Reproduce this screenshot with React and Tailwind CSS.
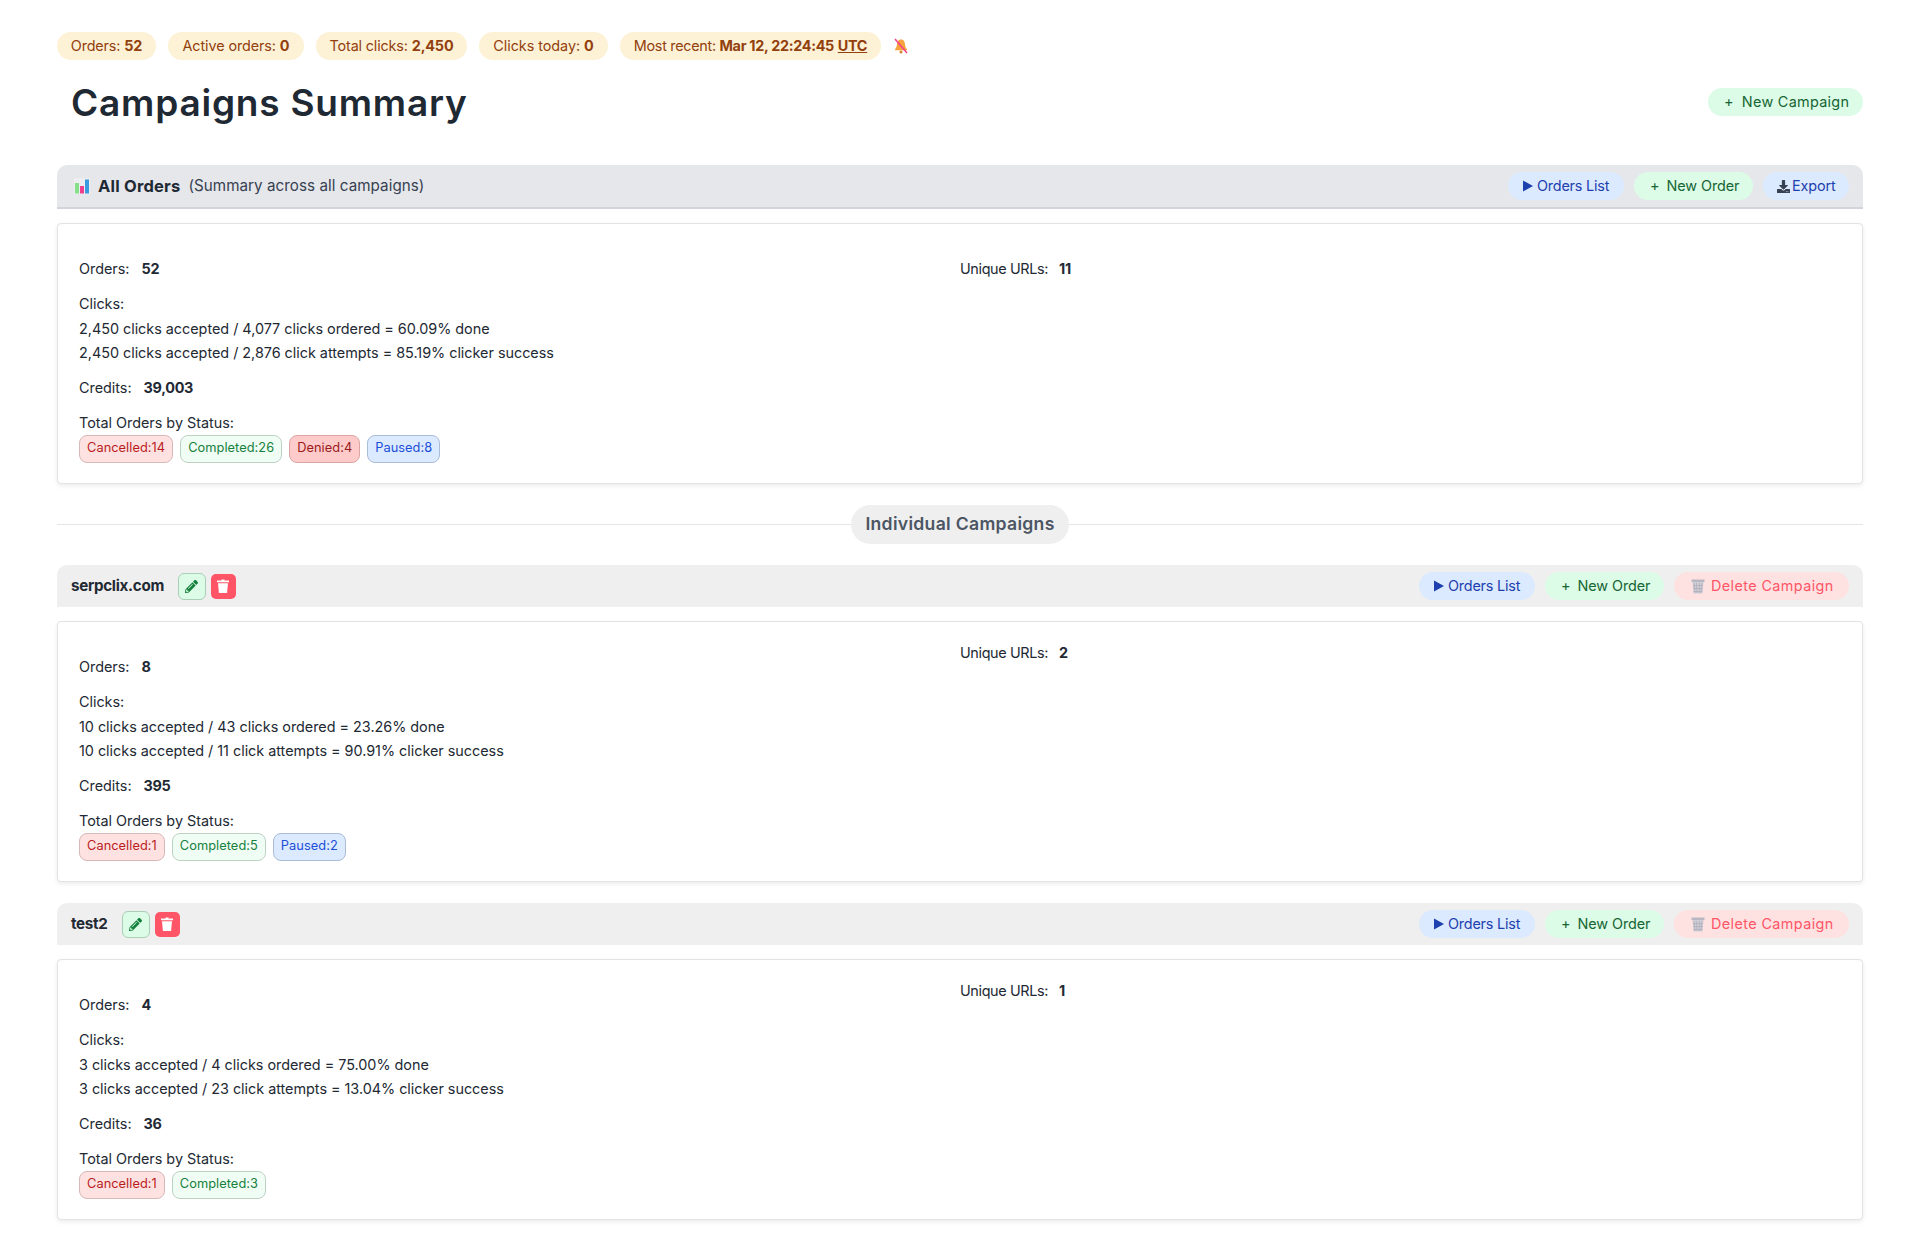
import React from "react";
import { FaPencilAlt, FaDownload } from "react-icons/fa";

const Play = ({ cls = "text-[#1e40af]" }) => (
  <svg viewBox="0 0 10 12" className={"w-[10px] h-[12px] shrink-0 " + cls}><polygon points="0,0.5 10,6 0,11.5" fill="currentColor" /></svg>
);

const ChartEmoji = () => (
  <svg viewBox="0 0 16 16" className="w-[16px] h-[16px] shrink-0">
    <rect x="0" y="0" width="16" height="16" fill="#eceef2" />
    <rect x="1" y="5" width="4" height="10.500" fill="#86e08a" />
    <rect x="6" y="8" width="4" height="7.500" fill="#ee3f8f" />
    <rect x="11" y="1.500" width="4" height="14" fill="#3a9be0" />
  </svg>
);

const BellOff = () => (
  <svg viewBox="0 0 16 16" className="w-[16px] h-[16px] shrink-0">
    <path d="M8 1.500c-3 0-3.800 2.600-4 5-.2 2.300-1.200 3.800-2 4.800v1h12v-1c-.8-1-1.800-2.500-2-4.800-.2-2.400-1-5-4-5z" fill="#f6a33c" />
    <circle cx="8" cy="14" r="1.500" fill="#d9822b" />
    <line x1="2" y1="1" x2="14" y2="15" stroke="#f5418b" strokeWidth="1.500" />
  </svg>
);

const Basket = () => (
  <svg viewBox="0 0 14 15" className="w-[14px] h-[15px] shrink-0">
    <rect x="0.500" y="0.500" width="13" height="2.500" fill="#b9b7c2" />
    <path d="M1.500 3h11l-1 11.500h-9z" fill="#cfcdd6" />
    <path d="M3 4l1 10M5.500 4l.3 10M8.500 4l-.3 10M11 4l-1 10M2 6.500h10M2.300 9.500h9.400M2.600 12.500h8.800" stroke="#b0aeba" strokeWidth="0.700" fill="none" />
  </svg>
);

const Bin = () => (
  <svg viewBox="0 0 12 14" className="w-[12px] h-[14px]">
    <path d="M4.500 0.500h3v1h4.500v1.800H0V1.500h4.500z" fill="#ffffff" />
    <path d="M1 4.200h10l-.9 9.800H1.900z" fill="#ffffff" />
  </svg>
);

const Pill = ({ className = "", children }) => (
  <span className={"inline-flex items-center h-7 rounded-[14px] text-[14.4px] whitespace-nowrap " + className}>{children}</span>
);

const OrdersList = () => (
  <Pill className="bg-[#dbeafe] text-[#1e40af] pl-[15px] gap-[4px] w-[116px] tracking-[-0.2px]"><Play />Orders List</Pill>
);
const NewOrder = () => (
  <Pill className="bg-[#dcfce7] text-[#166534] pl-[16px] gap-[7px] w-[119px] tracking-[-0.07px]"><span>+</span>New Order</Pill>
);

const Chip = ({ label, value, w, tight, children }) => (
  <span className={"inline-flex items-center justify-center h-7 rounded-[14px] bg-[#fdf2d5] text-[#92400e] text-[14.4px] whitespace-nowrap " + w + " " + tight}>
    {label}&nbsp;<strong className="font-bold">{value}</strong>{children}
  </span>
);

const tones = {
  Cancelled: "bg-[#fee2e2] border-[#d9b8b8] text-[#b91c1c]",
  Completed: "bg-[#f0fdf4] border-[#bcd3c3] text-[#15803d]",
  Denied: "bg-[#fecaca] border-[#dba5a5] text-[#991b1b]",
  Paused: "bg-[#dbeafe] border-[#a9bcd8] text-[#1d4ed8]",
};

const Status = ({ name, n }) => (
  <span className={"inline-flex items-center h-7 px-[7px] rounded-[8px] border text-[12.8px] tracking-[0.05px] whitespace-nowrap " + tones[name]}>{name}:{n}</span>
);

const Stats = ({ orders, urls, a, b, credits, statuses, raised }) => (
  <div className="mt-[14px] bg-white border border-[#e3e3e6] rounded-[4px] shadow-[0_2px_4px_rgba(0,0,0,0.08)] h-[261px] px-[21px] text-[14.4px] tracking-[-0.02px] leading-[24.5px] text-[#222933] grid grid-cols-2">
    <div className="pt-[33px]">
      <p className="mb-[10.500px]">Orders:<strong className="font-bold ml-[12px] tracking-[-0.2px]">{orders}</strong></p>
      <p>Clicks:</p>
      <p>{a}</p>
      <p>{b}</p>
      <p className="mt-[10px]">Credits:<strong className="font-bold ml-[12px] tracking-[-0.3px]">{credits}</strong></p>
      <p className="mt-[11px]">Total Orders by Status:</p>
      <div className="flex gap-[7px] -mt-[1px]">
        {statuses.map(([s, n]) => <Status key={s} name={s} n={n} />)}
      </div>
    </div>
    <div className={raised ? "pt-[19px]" : "pt-[33px]"}>
      <p className="tracking-[-0.35px]">Unique URLs:<strong className="font-bold ml-[11px]">{urls}</strong></p>
    </div>
  </div>
);

const Campaign = ({ name, stats }) => (
  <section className="mt-[21px] first:mt-0">
    <div className="h-[42px] rounded-t-[10px] bg-[#efefef] flex items-center justify-between pl-[14px] pr-[14px]">
      <div className="flex items-center">
        <h3 className="font-bold text-[15.200px] tracking-[-0.3px] text-[#1f2933]">{name}</h3>
        <span className="ml-[14px] w-[28px] h-[27px] rounded-[6px] bg-[#dcfce7] border border-[#a9cfb5] flex items-center justify-center text-[#15803d]"><FaPencilAlt size={13} /></span>
        <span className="ml-[5px] w-[25px] h-[25px] rounded-[5px] bg-[#ff5566] flex items-center justify-center"><Bin /></span>
      </div>
      <div className="flex items-center gap-[10px]">
        <OrdersList />
        <NewOrder />
        <Pill className="bg-[#fee2e2] text-[#ff5566] pl-[17px] gap-[6px] w-[175px] tracking-[0.4px]"><Basket />Delete Campaign</Pill>
      </div>
    </div>
    <Stats {...stats} raised />
  </section>
);

export default function App() {
  return (
    <div className="min-h-[1242px] bg-white px-[57px] pt-[32px] font-['Inter','Liberation_Sans',sans-serif]">
      <div className="flex items-center gap-[12px]">
        <Chip w="w-[99px]" tight="tracking-[-0.15px]" label="Orders:" value="52" />
        <Chip w="w-[136px]" tight="tracking-[-0.1px]" label="Active orders:" value="0" />
        <Chip w="w-[151px]" tight="tracking-[-0.15px]" label="Total clicks:" value="2,450" />
        <Chip w="w-[129px]" tight="tracking-[-0.05px]" label="Clicks today:" value="0" />
        <Chip w="w-[261px]" tight="tracking-[-0.3px]" label="Most recent:" value="Mar 12, 22:24:45">&nbsp;<strong className="font-bold underline">UTC</strong></Chip>
        <BellOff />
      </div>

      <div className="flex items-center justify-between mt-[20px] h-[44px] pl-[14px]">
        <h1 className="text-[37px] font-semibold tracking-[0.78px] text-[#1f2933] leading-none">Campaigns Summary</h1>
        <Pill className="bg-[#dcfce7] text-[#166534] pl-[16px] gap-[8px] w-[155px] tracking-[0.3px]"><span>+</span>New Campaign</Pill>
      </div>

      <div className="mt-[41px] h-[44px] rounded-t-[10px] bg-[#e5e7eb] border-b-2 border-[#d1d5db] flex items-center justify-between pl-[17px] pr-[14px]">
        <div className="flex items-center">
          <ChartEmoji />
          <h2 className="ml-[8px] font-bold text-[16.500px] tracking-[0.2px] text-[#1f2933]">All Orders</h2>
          <span className="ml-[8px] text-[15.200px] tracking-[0.05px] text-[#374151]">(Summary across all campaigns)</span>
        </div>
        <div className="flex items-center gap-[10px]">
          <OrdersList />
          <NewOrder />
          <Pill className="bg-[#dbeafe] text-[#1e40af] pl-[14px] gap-[2px] w-[86px] tracking-[-0.1px]"><FaDownload size={13} className="text-[#374151]" />Export</Pill>
        </div>
      </div>

      <Stats orders="52" urls="11" credits="39,003"
        a="2,450 clicks accepted / 4,077 clicks ordered = 60.09% done"
        b="2,450 clicks accepted / 2,876 click attempts = 85.19% clicker success"
        statuses={[["Cancelled", 14], ["Completed", 26], ["Denied", 4], ["Paused", 8]]} />

      <div className="relative mt-[21px] h-[39px] flex items-center justify-center">
        <div className="absolute inset-x-0 top-[19px] border-t border-[#e5e5e5]" />
        <span className="relative h-[39px] w-[218px] rounded-[20px] bg-[#efefef] flex items-center justify-center font-semibold text-[17.600px] tracking-[0.3px] text-[#4b5563]">Individual Campaigns</span>
      </div>

      <div className="mt-[21px]">
        <Campaign name="serpclix.com" stats={{ orders: "8", urls: "2", credits: "395",
          a: "10 clicks accepted / 43 clicks ordered = 23.26% done",
          b: "10 clicks accepted / 11 click attempts = 90.91% clicker success",
          statuses: [["Cancelled", 1], ["Completed", 5], ["Paused", 2]] }} />
        <Campaign name="test2" stats={{ orders: "4", urls: "1", credits: "36",
          a: "3 clicks accepted / 4 clicks ordered = 75.00% done",
          b: "3 clicks accepted / 23 click attempts = 13.04% clicker success",
          statuses: [["Cancelled", 1], ["Completed", 3]] }} />
      </div>
    </div>
  );
}
